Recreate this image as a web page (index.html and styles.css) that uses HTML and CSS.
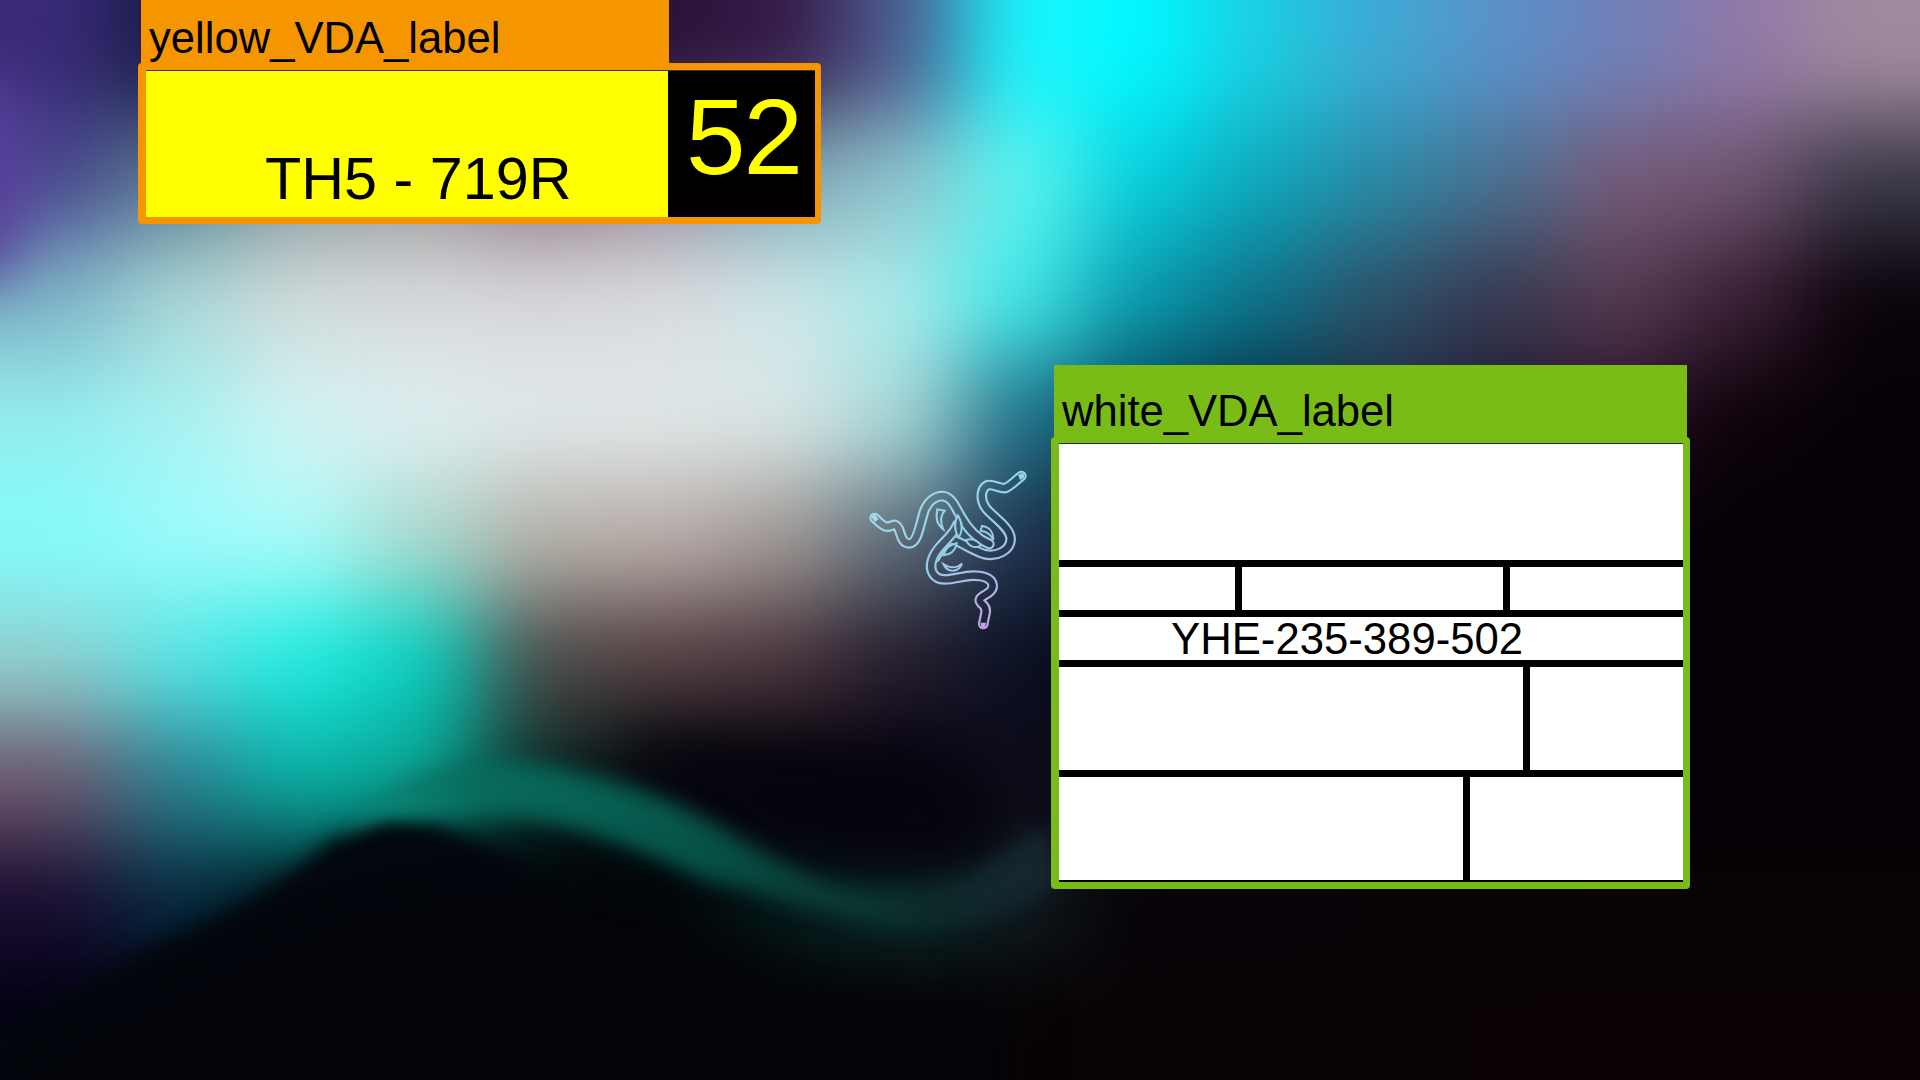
FILE: index.html
```html
<!DOCTYPE html>
<html lang="en">
<head>
<meta charset="utf-8">
<title>VDA labels</title>
<link rel="stylesheet" href="styles.css">
</head>
<body>
<main class="stage">
  <svg class="wallpaper" viewBox="0 0 1920 1080" preserveAspectRatio="none" aria-hidden="true">
    <defs>
      <filter id="mesh" color-interpolation-filters="sRGB" filterUnits="userSpaceOnUse" x="-300" y="-300" width="2520" height="1680"><feGaussianBlur stdDeviation="44"/></filter>
      <filter id="b30" color-interpolation-filters="sRGB" filterUnits="userSpaceOnUse" x="-300" y="-300" width="2520" height="1680"><feGaussianBlur stdDeviation="30"/></filter>
      <filter id="b10" color-interpolation-filters="sRGB" filterUnits="userSpaceOnUse" x="-300" y="-300" width="2520" height="1680"><feGaussianBlur stdDeviation="10"/></filter>
      <linearGradient id="ribbon" gradientUnits="userSpaceOnUse" x1="340" y1="0" x2="1060" y2="0">
        <stop offset="0" stop-color="#0a9080"/>
        <stop offset="0.2" stop-color="#086a5c"/>
        <stop offset="0.45" stop-color="#07584c"/>
        <stop offset="0.65" stop-color="#0a4038"/>
        <stop offset="0.82" stop-color="#0c2a2a"/>
        <stop offset="1" stop-color="#182530"/>
      </linearGradient>
    </defs>
    <g filter="url(#mesh)" shape-rendering="crispEdges">
      <rect x="-240" y="-240" width="361" height="361" fill="#3a2a78"/><rect x="120" y="-240" width="121" height="361" fill="#141a40"/><rect x="240" y="-240" width="121" height="361" fill="#1c1a44"/><rect x="360" y="-240" width="121" height="361" fill="#221a44"/><rect x="480" y="-240" width="121" height="361" fill="#261640"/><rect x="600" y="-240" width="121" height="361" fill="#2a1238"/><rect x="720" y="-240" width="121" height="361" fill="#351a48"/><rect x="840" y="-240" width="121" height="361" fill="#4f5c90"/><rect x="960" y="-240" width="121" height="361" fill="#1af5fc"/><rect x="1080" y="-240" width="121" height="361" fill="#00f8ff"/><rect x="1200" y="-240" width="121" height="361" fill="#1ccde0"/><rect x="1320" y="-240" width="121" height="361" fill="#3ea8d4"/><rect x="1440" y="-240" width="121" height="361" fill="#5b90c8"/><rect x="1560" y="-240" width="121" height="361" fill="#7080b8"/><rect x="1680" y="-240" width="121" height="361" fill="#9078a8"/><rect x="1800" y="-240" width="360" height="361" fill="#a08a9e"/>
      <rect x="-240" y="120" width="361" height="121" fill="#4a4a90"/><rect x="120" y="120" width="121" height="121" fill="#5a8090"/><rect x="240" y="120" width="121" height="121" fill="#8a9a9c"/><rect x="360" y="120" width="121" height="121" fill="#9a9a9c"/><rect x="480" y="120" width="121" height="121" fill="#907888"/><rect x="600" y="120" width="121" height="121" fill="#9a8c9a"/><rect x="720" y="120" width="121" height="121" fill="#7fa8b4"/><rect x="840" y="120" width="121" height="121" fill="#8fc4cc"/><rect x="960" y="120" width="121" height="121" fill="#5ef5f0"/><rect x="1080" y="120" width="121" height="121" fill="#06cfdc"/><rect x="1200" y="120" width="121" height="121" fill="#0ea8bc"/><rect x="1320" y="120" width="121" height="121" fill="#2a88a4"/><rect x="1440" y="120" width="121" height="121" fill="#4a7090"/><rect x="1560" y="120" width="121" height="121" fill="#765a78"/><rect x="1680" y="120" width="121" height="121" fill="#6e5470"/><rect x="1800" y="120" width="360" height="121" fill="#3a3848"/>
      <rect x="-240" y="240" width="361" height="121" fill="#7fb6c8"/><rect x="120" y="240" width="121" height="121" fill="#aad8d8"/><rect x="240" y="240" width="121" height="121" fill="#d2dcdc"/><rect x="360" y="240" width="121" height="121" fill="#d8dadc"/><rect x="480" y="240" width="121" height="121" fill="#d8d9dc"/><rect x="600" y="240" width="121" height="121" fill="#dadcdf"/><rect x="720" y="240" width="121" height="121" fill="#cfe6e8"/><rect x="840" y="240" width="121" height="121" fill="#a8ecec"/><rect x="960" y="240" width="121" height="121" fill="#40e8e8"/><rect x="1080" y="240" width="121" height="121" fill="#0a98ac"/><rect x="1200" y="240" width="121" height="121" fill="#0e7088"/><rect x="1320" y="240" width="121" height="121" fill="#2c5068"/><rect x="1440" y="240" width="121" height="121" fill="#383850"/><rect x="1560" y="240" width="121" height="121" fill="#543a50"/><rect x="1680" y="240" width="121" height="121" fill="#3a1e34"/><rect x="1800" y="240" width="360" height="121" fill="#0a020a"/>
      <rect x="-240" y="360" width="361" height="121" fill="#94eeee"/><rect x="120" y="360" width="121" height="121" fill="#a8f2f2"/><rect x="240" y="360" width="121" height="121" fill="#d2f3f3"/><rect x="360" y="360" width="121" height="121" fill="#dfeef0"/><rect x="480" y="360" width="121" height="121" fill="#e0e8ea"/><rect x="600" y="360" width="121" height="121" fill="#e0e7e8"/><rect x="720" y="360" width="121" height="121" fill="#dae6e6"/><rect x="840" y="360" width="121" height="121" fill="#a8d8d8"/><rect x="960" y="360" width="121" height="121" fill="#1e7088"/><rect x="1080" y="360" width="121" height="121" fill="#063f54"/><rect x="1200" y="360" width="121" height="121" fill="#052838"/><rect x="1320" y="360" width="121" height="121" fill="#1d2a40"/><rect x="1440" y="360" width="121" height="121" fill="#1d1a30"/><rect x="1560" y="360" width="121" height="121" fill="#2a0f28"/><rect x="1680" y="360" width="121" height="121" fill="#0c0208"/><rect x="1800" y="360" width="360" height="121" fill="#060006"/>
      <rect x="-240" y="480" width="361" height="121" fill="#84fcfc"/><rect x="120" y="480" width="121" height="121" fill="#9cfcfc"/><rect x="240" y="480" width="121" height="121" fill="#a8fcfa"/><rect x="360" y="480" width="121" height="121" fill="#a8d8cc"/><rect x="480" y="480" width="121" height="121" fill="#b4b0a8"/><rect x="600" y="480" width="121" height="121" fill="#b8aca8"/><rect x="720" y="480" width="121" height="121" fill="#a09894"/><rect x="840" y="480" width="121" height="121" fill="#5a6a78"/><rect x="960" y="480" width="121" height="121" fill="#1f3350"/><rect x="1080" y="480" width="121" height="121" fill="#0a1224"/><rect x="1200" y="480" width="121" height="121" fill="#080410"/><rect x="1320" y="480" width="121" height="121" fill="#060208"/><rect x="1440" y="480" width="121" height="121" fill="#060208"/><rect x="1560" y="480" width="121" height="121" fill="#040006"/><rect x="1680" y="480" width="121" height="121" fill="#040006"/><rect x="1800" y="480" width="360" height="121" fill="#040006"/>
      <rect x="-240" y="600" width="361" height="121" fill="#90d0d0"/><rect x="120" y="600" width="121" height="121" fill="#58e4e4"/><rect x="240" y="600" width="121" height="121" fill="#20ece0"/><rect x="360" y="600" width="121" height="121" fill="#08d0c0"/><rect x="480" y="600" width="121" height="121" fill="#4a4a48"/><rect x="600" y="600" width="121" height="121" fill="#523c40"/><rect x="720" y="600" width="121" height="121" fill="#48343c"/><rect x="840" y="600" width="121" height="121" fill="#251c2c"/><rect x="960" y="600" width="121" height="121" fill="#0a1024"/><rect x="1080" y="600" width="121" height="121" fill="#040108"/><rect x="1200" y="600" width="121" height="121" fill="#040108"/><rect x="1320" y="600" width="121" height="121" fill="#040108"/><rect x="1440" y="600" width="121" height="121" fill="#040108"/><rect x="1560" y="600" width="121" height="121" fill="#040006"/><rect x="1680" y="600" width="121" height="121" fill="#040006"/><rect x="1800" y="600" width="360" height="121" fill="#040006"/>
      <rect x="-240" y="720" width="361" height="121" fill="#6c5870"/><rect x="120" y="720" width="121" height="121" fill="#2a8090"/><rect x="240" y="720" width="121" height="121" fill="#08b0a4"/><rect x="360" y="720" width="121" height="121" fill="#0aa090"/><rect x="480" y="720" width="121" height="121" fill="#082822"/><rect x="600" y="720" width="121" height="121" fill="#040c10"/><rect x="720" y="720" width="121" height="121" fill="#06040c"/><rect x="840" y="720" width="121" height="121" fill="#040210"/><rect x="960" y="720" width="121" height="121" fill="#100e1c"/><rect x="1080" y="720" width="121" height="121" fill="#050108"/><rect x="1200" y="720" width="121" height="121" fill="#050108"/><rect x="1320" y="720" width="121" height="121" fill="#050108"/><rect x="1440" y="720" width="121" height="121" fill="#050108"/><rect x="1560" y="720" width="121" height="121" fill="#050006"/><rect x="1680" y="720" width="121" height="121" fill="#050006"/><rect x="1800" y="720" width="360" height="121" fill="#050006"/>
      <rect x="-240" y="840" width="361" height="121" fill="#180c30"/><rect x="120" y="840" width="121" height="121" fill="#052a3e"/><rect x="240" y="840" width="121" height="121" fill="#04141c"/><rect x="360" y="840" width="121" height="121" fill="#020c10"/><rect x="480" y="840" width="121" height="121" fill="#020408"/><rect x="600" y="840" width="121" height="121" fill="#02060a"/><rect x="720" y="840" width="121" height="121" fill="#06201f"/><rect x="840" y="840" width="121" height="121" fill="#0a2a2a"/><rect x="960" y="840" width="121" height="121" fill="#101c20"/><rect x="1080" y="840" width="121" height="121" fill="#060208"/><rect x="1200" y="840" width="121" height="121" fill="#060208"/><rect x="1320" y="840" width="121" height="121" fill="#060206"/><rect x="1440" y="840" width="121" height="121" fill="#060206"/><rect x="1560" y="840" width="121" height="121" fill="#080206"/><rect x="1680" y="840" width="121" height="121" fill="#080206"/><rect x="1800" y="840" width="360" height="121" fill="#080206"/>
      <rect x="-240" y="960" width="361" height="360" fill="#040214"/><rect x="120" y="960" width="121" height="360" fill="#040418"/><rect x="240" y="960" width="121" height="360" fill="#040210"/><rect x="360" y="960" width="121" height="360" fill="#040208"/><rect x="480" y="960" width="121" height="360" fill="#040204"/><rect x="600" y="960" width="121" height="360" fill="#060204"/><rect x="720" y="960" width="121" height="360" fill="#060204"/><rect x="840" y="960" width="121" height="360" fill="#070204"/><rect x="960" y="960" width="121" height="360" fill="#070204"/><rect x="1080" y="960" width="121" height="360" fill="#080205"/><rect x="1200" y="960" width="121" height="360" fill="#080205"/><rect x="1320" y="960" width="121" height="360" fill="#080205"/><rect x="1440" y="960" width="121" height="360" fill="#0a0206"/><rect x="1560" y="960" width="121" height="360" fill="#0a0206"/><rect x="1680" y="960" width="121" height="360" fill="#0a0206"/><rect x="1800" y="960" width="360" height="360" fill="#0a0206"/>
    </g>
    <ellipse cx="-20" cy="180" rx="45" ry="110" fill="#5a3e9c" filter="url(#b30)"/>
    <path d="M600,745 C680,730 800,740 1000,780 L1000,860 C880,880 780,860 720,820 C660,790 620,770 600,745Z" fill="#06030c" filter="url(#b30)"/>
    <path d="M-80,1070 L56,1003 L140,953 L245,903 L295,870 L337,835 L379,815 L440,825 L520,860 L600,1140 L-80,1140Z" fill="#03080e" filter="url(#b10)"/>
    <path d="M335,835 C370,790 440,760 491,760 C560,762 640,785 702,817 C750,842 800,880 842,887 C890,897 950,890 982,867 C1010,850 1030,835 1045,825 L1060,880 C1040,905 970,930 912,930 C860,928 800,900 702,880 C640,850 570,820 491,815 C450,810 400,806 335,835Z" fill="url(#ribbon)" filter="url(#b10)"/>
    <path d="M-80,1120 L70,1020 L320,900 C380,880 430,870 490,870 C600,880 690,910 800,975 C880,1000 930,1010 1000,1000 L1000,1160 L-80,1160Z" fill="#03040a" filter="url(#b30)"/>
  </svg>

  <section class="win win-yellow">
    <header class="bar bar-orange"><span class="bar-text">yellow_VDA_label</span></header>
    <div class="frame frame-orange">
      <div class="plate">
        <div class="plate-main">TH5 - 719R</div>
        <div class="plate-num">52</div>
      </div>
    </div>
  </section>

  <section class="win win-white">
    <header class="bar bar-green"><span class="bar-text">white_VDA_label</span></header>
    <div class="frame frame-green">
      <div class="sheet">
        <div class="row row-top"></div>
        <div class="row row-thin"><div class="cell c-a"></div><div class="cell c-b"></div><div class="cell c-fill"></div></div>
        <div class="row row-thin row-code">YHE-235-389-502</div>
        <div class="row row-tall"><div class="cell c-c"></div><div class="cell c-fill"></div></div>
        <div class="row row-tall row-last"><div class="cell c-d"></div><div class="cell c-fill"></div></div>
      </div>
    </div>
  </section>

  <svg class="logo" viewBox="0 0 540 540" aria-hidden="true">
    <defs>
      <linearGradient id="lg" x1="0.25" y1="0.1" x2="0.8" y2="0.85">
        <stop offset="0" stop-color="#a4dcea"/>
        <stop offset="0.5" stop-color="#93cfe8"/>
        <stop offset="1" stop-color="#c2a4e6"/>
      </linearGradient>
      <filter id="soft"><feGaussianBlur stdDeviation="1"/></filter>
      <mask id="snakes" maskUnits="userSpaceOnUse" x="0" y="0" width="540" height="540">
        <rect width="540" height="540" fill="#000"/>
        <g fill="none" stroke-linecap="round" stroke-linejoin="round">
          <path d="M44,174 C58,186 68,200 82,200 C98,200 104,184 116,206 C124,226 126,250 148,250 C172,250 178,200 192,155 C202,128 222,108 248,108 C276,110 288,146 304,172 C320,200 350,236 388,252" stroke="#fff" stroke-width="32"/>
          <path d="M44,174 C58,186 68,200 82,200 C98,200 104,184 116,206 C124,226 126,250 148,250 C172,250 178,200 192,155 C202,128 222,108 248,108 C276,110 288,146 304,172 C320,200 350,236 388,252" stroke="#000" stroke-width="19"/>
          <path d="M484,48 C468,60 452,78 436,84 C420,88 398,70 382,76 C362,86 360,118 376,142 C396,170 450,200 452,236 C452,272 408,292 372,282 C340,272 310,250 280,240 C260,236 240,262 226,292" stroke="#fff" stroke-width="32"/>
          <path d="M484,48 C468,60 452,78 436,84 C420,88 398,70 382,76 C362,86 360,118 376,142 C396,170 450,200 452,236 C452,272 408,292 372,282 C340,272 310,250 280,240 C260,236 240,262 226,292" stroke="#000" stroke-width="19"/>
          <path d="M370,492 C372,470 384,452 372,438 C362,428 350,420 370,408 C388,398 404,388 396,368 C386,346 340,342 300,352 C270,358 236,366 220,342 C204,318 218,284 242,258 C262,236 282,220 292,194" stroke="#fff" stroke-width="32"/>
          <path d="M370,492 C372,470 384,452 372,438 C362,428 350,420 370,408 C388,398 404,388 396,368 C386,346 340,342 300,352 C270,358 236,366 220,342 C204,318 218,284 242,258 C262,236 282,220 292,194" stroke="#000" stroke-width="19"/>
        </g>
        <g fill="#000" stroke="#fff" stroke-width="6">
          <path d="M294,166 C306,186 310,212 296,232 C282,212 282,186 294,166Z"/>
          <path d="M318,240 C336,234 352,242 364,256 C342,268 326,258 318,240Z"/>
          <path d="M250,286 C256,264 270,254 290,250 C286,272 270,284 250,286Z"/>
          <path d="M250,312 C272,326 292,324 306,310 C298,336 264,342 250,312Z"/>
          <path d="M232,148 C226,176 232,196 250,208 C240,186 240,168 254,152Z"/>
          <path d="M366,198 C388,200 400,216 400,240 C392,222 378,214 362,212Z"/>
        </g>
        <g fill="#fff">
          <path d="M34,170 L44,162 L56,178 L44,186Z"/>
          <path d="M474,44 L490,38 L494,52 L480,60Z"/>
          <path d="M362,488 L378,488 L376,502 L364,502Z"/>
        </g>
      </mask>
    </defs>
    <rect width="540" height="540" fill="url(#lg)" mask="url(#snakes)" filter="url(#soft)"/>
  </svg>
</main>
</body>
</html>
```

FILE: styles.css
```css
html, body {
  margin: 0;
  padding: 0;
  background: #040106;
}

.stage {
  position: relative;
  width: 1920px;
  height: 1080px;
  overflow: hidden;
  font-family: "Liberation Sans", Arial, sans-serif;
  color: #000;
}

.wallpaper {
  position: absolute;
  inset: 0;
  width: 1920px;
  height: 1080px;
  display: block;
}

.win {
  position: absolute;
  display: flex;
  flex-direction: column;
}

.win-yellow { left: 138px; top: 0; width: 683px; }
.win-white { left: 1051px; top: 365px; width: 639px; }

.bar {
  display: flex;
  align-items: flex-end;
  font-size: 43.6px;
  line-height: 50px;
}

.bar-orange {
  height: 63px;
  margin-left: 3px;
  width: 528px;
  background: #f59500;
  padding-left: 8px;
  box-sizing: border-box;
}

.bar-green {
  height: 72px;
  margin: 0 3px;
  background: #7abc17;
  padding-left: 8px;
  box-sizing: border-box;
  padding-bottom: 1px;
}

.frame {
  border-radius: 4px;
  box-sizing: border-box;
}

.frame-orange {
  height: 161px;
  background: #f59500;
  padding: 7px 6px 7px 8px;
}

.frame-green {
  height: 452px;
  background: #7abc17;
  padding: 6px 7px 7px 8px;
}

.plate {
  display: flex;
  height: 100%;
  border-top: 1px solid #3a3a20;
  box-sizing: border-box;
}

.plate-main {
  width: 522px;
  background: #ffff00;
  display: flex;
  align-items: flex-end;
  font-size: 59.3px;
  line-height: 60px;
  padding-left: 119px;
  padding-bottom: 8px;
  box-sizing: border-box;
}

.plate-num {
  flex: 1;
  background: #000;
  color: #ffff00;
  font-size: 107px;
  line-height: 110px;
  letter-spacing: -2px;
  padding: 11px 0 0 18px;
  box-sizing: border-box;
}

.sheet {
  height: 100%;
  background: #fff;
  display: flex;
  flex-direction: column;
  border-top: 1px solid #123a10;
  border-bottom: 2px solid #000;
  box-sizing: border-box;
}

.row {
  display: flex;
  box-sizing: content-box;
  border-bottom: 7px solid #000;
}

.row-top { height: 116px; }
.row-thin { height: 43px; }
.row-tall { height: 103px; }
.row-last { border-bottom: 0; }

.row-code {
  font-size: 43.7px;
  line-height: 43px;
  padding-left: 112px;
}

.cell {
  box-sizing: content-box;
  border-right: 7px solid #000;
}

.c-a { width: 176px; }
.c-b { width: 261px; }
.c-c { width: 464px; }
.c-d { width: 404px; }

.cell.c-fill {
  flex: 1;
  border-right: 0;
}

.logo {
  position: absolute;
  left: 860px;
  top: 460px;
  width: 180px;
  height: 180px;
}
```
